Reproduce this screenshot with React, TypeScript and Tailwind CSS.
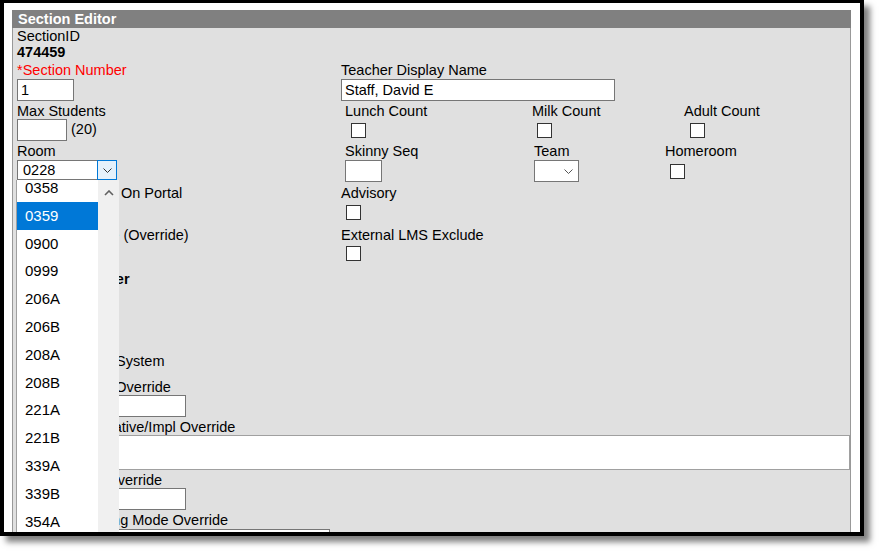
import React from "react";

const label = "block h-[17px] leading-[19px] whitespace-nowrap";
const field = "block h-[22px] border border-[#767676] bg-white px-[3px] text-[14.5px] leading-[20px] outline-none";
const check = "block w-[15px] h-[15px] border border-[#333333] bg-white";

const rooms = ["0358", "0359", "0900", "0999", "206A", "206B", "208A", "208B", "221A", "221B", "339A", "339B", "354A", "354B", "355A"];

function RoomSelect() {
  return (
    <div className="relative mt-[1px] flex h-[20px] w-[100px]">
      <div className="flex-1 border-y border-l border-[#767676] bg-white pl-[5px] leading-[19px]">0228</div>
      <div className="flex w-[20px] items-center justify-center border border-[#0078d7] bg-[#e5f1fb]">
        <svg width="9" height="5" viewBox="0 0 9 5">
          <polyline points="0.5,0.5 4.5,4.5 8.5,0.5" fill="none" stroke="#333333" strokeWidth="1" />
        </svg>
      </div>
      {/* open list, scrolled a few px */}
      <div className="absolute left-[-1px] top-[20px] z-10 flex h-[400px] w-[103px] border-l border-[#a0a0a0] bg-white">
        <div className="w-[81px] overflow-hidden">
          <div className="-mt-[6px]">
            {rooms.map((r) => (
              <div
                key={r}
                className={
                  r === "0359"
                    ? "h-[27.8px] bg-[#0078d7] pl-[8px] text-[15px] leading-[28.8px] text-white"
                    : "h-[27.8px] pl-[8px] text-[15px] leading-[28.8px] text-black"
                }
              >
                {r}
              </div>
            ))}
          </div>
        </div>
        <div className="flex w-[21px] justify-center bg-[#f0f0f0] pt-[10px]">
          <svg width="10" height="6" viewBox="0 0 10 6">
            <polyline points="1,5 5,1 9,5" fill="none" stroke="#606060" strokeWidth="1.6" />
          </svg>
        </div>
      </div>
    </div>
  );
}

export default function App() {
  return (
    <div className="h-[551px] w-[879px] overflow-hidden bg-white font-['Liberation_Sans',Arial,sans-serif] text-[14.5px] text-black">
      <div className="h-[536px] w-[864px] overflow-hidden border-b-4 border-l-4 border-r-4 border-t-[3px] border-black bg-white pl-[8px] pr-[9px] pt-[7px] shadow-[6px_6px_6px_rgba(0,0,0,0.5)]">
        <div className="h-[18px] bg-[#808080] pl-[6px] font-bold leading-[19px] text-white">Section Editor</div>
        <div className="relative h-[620px] border-x border-[#999999] bg-[#e0e0e0] pl-[4px]">
          {/* id */}
          <div className="pb-[1px]">
            <div className="h-[16px] leading-[17px]">SectionID</div>
            <div className="h-[16px] font-bold leading-[17px]">474459</div>
          </div>

          <div className="flex h-[41px]">
            <div className="w-[324px]">
              <span className={label + " text-[#f00]"}>*Section Number</span>
              <input readOnly defaultValue="1" className={field + " mt-[1px] w-[57px]"} />
            </div>
            <div>
              <span className={label}>Teacher Display Name</span>
              <input readOnly defaultValue="Staff, David E" className={field + " mt-[1px] w-[274px]"} />
            </div>
          </div>

          <div className="flex h-[40px]">
            <div className="w-[328px]">
              <span className={label}>Max Students</span>
              <div className="flex items-center">
                <input readOnly className={field + " w-[50px]"} />
                <span className="ml-[4px]">(20)</span>
              </div>
            </div>
            <div className="w-[187px]">
              <span className={label}>Lunch Count</span>
              <span className={check + " ml-[6px] mt-[4px]"} />
            </div>
            <div className="w-[152px]">
              <span className={label}>Milk Count</span>
              <span className={check + " ml-[5px] mt-[4px]"} />
            </div>
            <div>
              <span className={label}>Adult Count</span>
              <span className={check + " ml-[6px] mt-[4px]"} />
            </div>
          </div>

          <div className="flex h-[41px]">
            <div className="w-[328px]">
              <span className={label}>Room</span>
              <RoomSelect />
            </div>
            <div className="w-[189px]">
              <span className={label}>Skinny Seq</span>
              <input readOnly className={field + " mt-[1px] w-[37px]"} />
            </div>
            <div className="w-[131px]">
              <span className={label}>Team</span>
              <div className="mt-[1px] flex h-[22px] w-[45px] items-center justify-end border border-[#767676] bg-white pr-[5px]">
                <svg width="9" height="5" viewBox="0 0 9 5">
                  <polyline points="0.5,0.5 4.5,4.5 8.5,0.5" fill="none" stroke="#555555" strokeWidth="1" />
                </svg>
              </div>
            </div>
            <div>
              <span className={label}>Homeroom</span>
              <span className={check + " ml-[5px] mt-[5px]"} />
            </div>
          </div>

          <div className="flex h-[42px] pt-[1px]">
            <div className="w-[324px]">
              <span className={label}>Hide Standards On Portal</span>
            </div>
            <div>
              <span className={label}>Advisory</span>
              <span className={check + " ml-[5px] mt-[4px]"} />
            </div>
          </div>

          <div className="flex h-[45px] pt-[1px]">
            <div className="w-[324px]">
              <span className={label}>Funding Source (Override)</span>
            </div>
            <div>
              <span className={label}>External LMS Exclude</span>
              <span className={check + " ml-[5px] mt-[3px]"} />
            </div>
          </div>

          <span className={label + " font-bold"}>Primary Teacher</span>
          <div className="h-[65px]" />

          <span className={label}>Gifted Delivery System</span>
          <span className={label + " mt-[9px]"}>Program Code Override</span>
          <input readOnly className={field + " w-[169px]"} />
          <span className={label + " mt-[1px]"}>Program Alternative/Impl Override</span>
          <div className="h-[35px] w-full border border-[#a0a0a0] bg-white" />
          <span className={label + " mt-[1px]"}>Course Level Override</span>
          <input readOnly className={field + " w-[169px]"} />
          <span className={label + " mt-[1px]"}>Remote Learning Mode Override</span>
          <div className="mt-[1px] h-[22px] w-[313px] border border-[#767676] bg-white" />
        </div>
      </div>
    </div>
  );
}
